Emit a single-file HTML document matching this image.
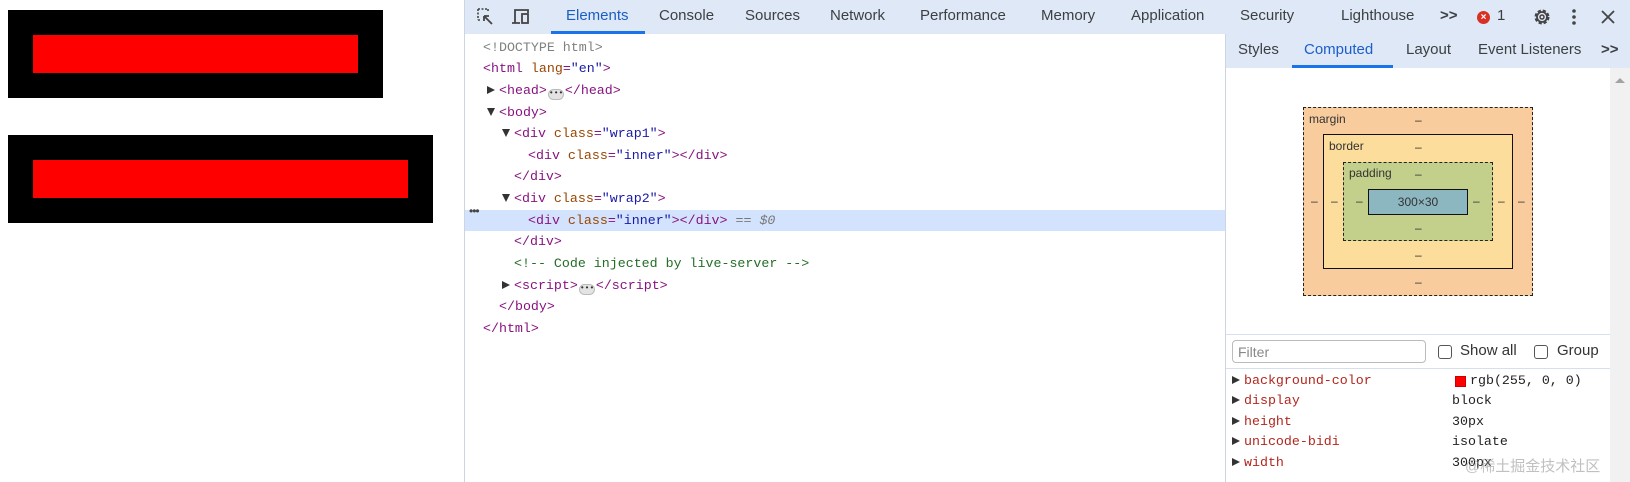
<!DOCTYPE html>
<html><head><style>
*{margin:0;padding:0;box-sizing:border-box}
body{width:1630px;height:482px;overflow:hidden;background:#fff;position:relative;font-family:"Liberation Sans",sans-serif}
.a{position:absolute;white-space:nowrap}
.tab{position:absolute;top:7px;font-size:15px;color:#3c4043}
.code{position:absolute;font-family:"Liberation Mono",monospace;font-size:13.3px;height:21.6px;line-height:21.6px;color:#881280;white-space:nowrap}
.n{color:#994500}.v{color:#1a1aa6}.c{color:#236e25}
.tri{display:inline-block;width:0;height:0;border-left:4px solid transparent;border-right:4px solid transparent;border-top:8px solid #333;margin-right:4px;vertical-align:0}
.trr{display:inline-block;width:0;height:0;border-top:4.5px solid transparent;border-bottom:4.5px solid transparent;border-left:8px solid #333;margin-right:4px}
.ell{display:inline-block;width:16px;height:11px;border-radius:6px;background:#e3e3e3;border:1px solid #bbb;vertical-align:-1px;font-size:8px;line-height:7px;text-align:center;color:#333;margin:0 1px}
.prop{position:absolute;left:1232px;font-family:"Liberation Mono",monospace;font-size:13.3px;color:#b3261e;white-space:nowrap}
.val{position:absolute;left:1452px;font-family:"Liberation Mono",monospace;font-size:13.3px;color:#222;white-space:nowrap}
.bm{position:absolute;font-size:12px;color:#333}
</style></head><body>
<div class="a" style="left:8px;top:10px;width:375px;height:88px;background:#000"></div>
<div class="a" style="left:33px;top:35px;width:325px;height:38px;background:red"></div>
<div class="a" style="left:8px;top:135px;width:425px;height:88px;background:#000"></div>
<div class="a" style="left:33px;top:160px;width:375px;height:38px;background:red"></div>

<div class="a" style="left:464px;top:0;width:1166px;height:34px;background:#dfe8f6"></div>
<div class="a" style="left:464px;top:0;width:1px;height:482px;background:#cbd5e4"></div>
<svg class="a" style="left:476px;top:7px" width="20" height="20" viewBox="0 0 20 20" fill="none" stroke="#444" stroke-width="1.6"><path d="M2 2h10M2 2v11M2 13h2M12 2v3" stroke-dasharray="2 1.5"/><path d="M8 9l8 8M8 9h5M8 9v5" stroke-width="1.8"/></svg>
<svg class="a" style="left:511px;top:8px" width="22" height="18" viewBox="0 0 22 18" fill="none" stroke="#444" stroke-width="1.8"><path d="M4 15V2h13v3M1 15h8"/><rect x="11" y="6" width="6" height="9"/></svg>
<div class="tab" style="left:566px;color:#1a5fc8">Elements</div>
<div class="a" style="left:551px;top:31px;width:94px;height:3px;background:#1a73e8"></div>
<div class="tab" style="left:659px">Console</div>
<div class="tab" style="left:745px">Sources</div>
<div class="tab" style="left:830px">Network</div>
<div class="tab" style="left:920px">Performance</div>
<div class="tab" style="left:1041px">Memory</div>
<div class="tab" style="left:1131px">Application</div>
<div class="tab" style="left:1240px">Security</div>
<div class="tab" style="left:1341px">Lighthouse</div>
<div class="tab" style="left:1440px;font-weight:bold">&gt;&gt;</div>
<div class="a" style="left:1477px;top:11px;width:13px;height:13px;border-radius:50%;background:#d93025;color:#fff;font-size:10px;line-height:13px;text-align:center;font-weight:bold">×</div>
<div class="tab" style="left:1497px">1</div>
<svg class="a" style="left:1532px;top:7px" width="20" height="20" viewBox="0 0 20 20"><circle cx="10" cy="10" r="6" fill="none" stroke="#444" stroke-width="3" stroke-dasharray="3 1.8"/><circle cx="10" cy="10" r="5" fill="none" stroke="#444" stroke-width="1.8"/><circle cx="10" cy="10" r="2" fill="none" stroke="#444" stroke-width="1.5"/></svg>
<svg class="a" style="left:1570px;top:7px" width="8" height="20"><circle cx="4" cy="4" r="1.8" fill="#444"/><circle cx="4" cy="10" r="1.8" fill="#444"/><circle cx="4" cy="16" r="1.8" fill="#444"/></svg>
<svg class="a" style="left:1600px;top:9px" width="16" height="16" stroke="#444" stroke-width="1.8"><path d="M2 2l12 12M14 2L2 14"/></svg>

<div class="a" style="left:465px;top:210px;width:760px;height:21px;background:#d3e3fd"></div>
<div class="a" style="left:469px;top:204px;font-size:12px;color:#444;letter-spacing:-1px">•••</div>
<div class="code" style="top:37px;left:483px;color:#808080">&lt;!DOCTYPE html&gt;</div>
<div class="code" style="top:58px;left:483px">&lt;html <span class="n">lang</span>=<span class="v">"en"</span>&gt;</div>
<div class="code" style="top:80px;left:487px"><span class="trr"></span>&lt;head&gt;<span class="ell">•••</span>&lt;/head&gt;</div>
<div class="code" style="top:102px;left:487px"><span class="tri"></span>&lt;body&gt;</div>
<div class="code" style="top:123px;left:502px"><span class="tri"></span>&lt;div <span class="n">class</span>=<span class="v">"wrap1"</span>&gt;</div>
<div class="code" style="top:145px;left:528px">&lt;div <span class="n">class</span>=<span class="v">"inner"</span>&gt;&lt;/div&gt;</div>
<div class="code" style="top:166px;left:514px">&lt;/div&gt;</div>
<div class="code" style="top:188px;left:502px"><span class="tri"></span>&lt;div <span class="n">class</span>=<span class="v">"wrap2"</span>&gt;</div>
<div class="code" style="top:210px;left:528px">&lt;div <span class="n">class</span>=<span class="v">"inner"</span>&gt;&lt;/div&gt; <span style="color:#777">== <i>$0</i></span></div>
<div class="code" style="top:231px;left:514px">&lt;/div&gt;</div>
<div class="code" style="top:253px;left:514px"><span class="c">&lt;!-- Code injected by live-server --&gt;</span></div>
<div class="code" style="top:275px;left:502px"><span class="trr"></span>&lt;script&gt;<span class="ell">•••</span>&lt;/script&gt;</div>
<div class="code" style="top:296px;left:499px">&lt;/body&gt;</div>
<div class="code" style="top:318px;left:483px">&lt;/html&gt;</div>

<div class="a" style="left:1225px;top:34px;width:405px;height:34px;background:#dfe8f6"></div>
<div class="a" style="left:1225px;top:34px;width:1px;height:448px;background:#cbd5e4"></div>
<div class="tab" style="left:1238px;top:41px">Styles</div>
<div class="tab" style="left:1304px;top:41px;color:#1a5fc8">Computed</div>
<div class="a" style="left:1292px;top:65px;width:101px;height:3px;background:#1a73e8"></div>
<div class="tab" style="left:1406px;top:41px">Layout</div>
<div class="tab" style="left:1478px;top:41px">Event Listeners</div>
<div class="tab" style="left:1601px;top:41px;font-weight:bold">&gt;&gt;</div>
<div class="a" style="left:1610px;top:68px;width:20px;height:414px;background:#f1f1f1"></div>
<div class="a" style="left:1615px;top:78px;width:0;height:0;border-left:5px solid transparent;border-right:5px solid transparent;border-bottom:5px solid #a3a3a3"></div>

<div class="a" style="left:1303px;top:107px;width:230px;height:189px;background:#f9cc9d;border:1px dashed #222"></div>
<div class="a" style="left:1323px;top:134px;width:190px;height:135px;background:#fddd9b;border:1px solid #111"></div>
<div class="a" style="left:1343px;top:162px;width:150px;height:79px;background:#c3d08b;border:1px dashed #222"></div>
<div class="a" style="left:1368px;top:189px;width:100px;height:26px;background:#8cb6c0;border:1px solid #111;font-size:12px;text-align:center;line-height:24px;color:#333">300×30</div>
<div class="bm" style="left:1309px;top:112px">margin</div>
<div class="bm" style="left:1329px;top:139px">border</div>
<div class="bm" style="left:1349px;top:166px">padding</div>
<div class="bm" style="left:1415px;top:113px">–</div>
<div class="bm" style="left:1415px;top:140px">–</div>
<div class="bm" style="left:1415px;top:167px">–</div>
<div class="bm" style="left:1415px;top:221px">–</div>
<div class="bm" style="left:1415px;top:248px">–</div>
<div class="bm" style="left:1415px;top:275px">–</div>
<div class="bm" style="left:1311px;top:194px">–</div>
<div class="bm" style="left:1331px;top:194px">–</div>
<div class="bm" style="left:1356px;top:194px">–</div>
<div class="bm" style="left:1473px;top:194px">–</div>
<div class="bm" style="left:1498px;top:194px">–</div>
<div class="bm" style="left:1518px;top:194px">–</div>

<div class="a" style="left:1226px;top:334px;width:384px;height:1px;background:#d6dfee"></div>
<div class="a" style="left:1232px;top:340px;width:194px;height:23px;border:1px solid #bbb;border-radius:4px;font-size:14px;color:#888;padding:3px 5px">Filter</div>
<div class="a" style="left:1438px;top:345px;width:14px;height:14px;border:1.5px solid #555;border-radius:3px"></div>
<div class="a" style="left:1460px;top:342px;font-size:15px;color:#333">Show all</div>
<div class="a" style="left:1534px;top:345px;width:14px;height:14px;border:1.5px solid #555;border-radius:3px"></div>
<div class="a" style="left:1557px;top:342px;font-size:15px;color:#333">Group</div>
<div class="a" style="left:1226px;top:368px;width:384px;height:1px;background:#d6dfee"></div>

<div class="prop" style="top:373px"><span class="trr"></span>background-color</div>
<div class="a" style="left:1455px;top:376px;width:11px;height:11px;background:red;border:1px solid #c00"></div>
<div class="val" style="top:373px;left:1470px">rgb(255, 0, 0)</div>
<div class="prop" style="top:393px"><span class="trr"></span>display</div><div class="val" style="top:393px">block</div>
<div class="prop" style="top:414px"><span class="trr"></span>height</div><div class="val" style="top:414px">30px</div>
<div class="prop" style="top:434px"><span class="trr"></span>unicode-bidi</div><div class="val" style="top:434px">isolate</div>
<div class="prop" style="top:455px"><span class="trr"></span>width</div><div class="val" style="top:455px">300px</div>
<div class="a" style="left:1465px;top:455px;font-size:15px;color:rgba(150,150,150,0.6);font-family:'Liberation Sans','Noto Sans CJK SC',sans-serif">@稀土掘金技术社区</div>
</body></html>
